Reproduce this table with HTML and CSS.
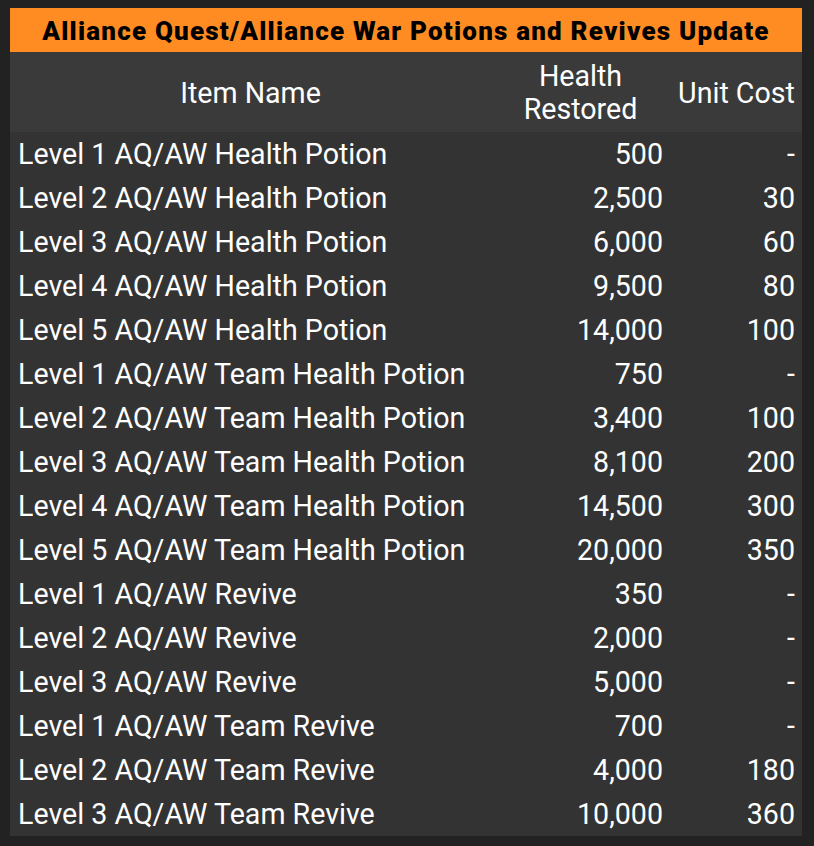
FILE: index.html
```html
<!DOCTYPE html>
<html>
<head>
<meta charset="utf-8">
<link rel="stylesheet" href="styles.css">
</head>
<body>
<table class="potions">
  <colgroup>
    <col class="c-name"><col class="c-health"><col class="c-cost">
  </colgroup>
  <thead>
    <tr><th colspan="3" class="title">Alliance Quest/Alliance War Potions and Revives Update</th></tr>
    <tr class="heads"><th>Item Name</th><th>Health<br>Restored</th><th>Unit Cost</th></tr>
  </thead>
  <tbody>
    <tr><td>Level 1 AQ/AW Health Potion</td><td class="num">500</td><td class="num">-</td></tr>
    <tr><td>Level 2 AQ/AW Health Potion</td><td class="num">2,500</td><td class="num">30</td></tr>
    <tr><td>Level 3 AQ/AW Health Potion</td><td class="num">6,000</td><td class="num">60</td></tr>
    <tr><td>Level 4 AQ/AW Health Potion</td><td class="num">9,500</td><td class="num">80</td></tr>
    <tr><td>Level 5 AQ/AW Health Potion</td><td class="num">14,000</td><td class="num">100</td></tr>
    <tr><td>Level 1 AQ/AW Team Health Potion</td><td class="num">750</td><td class="num">-</td></tr>
    <tr><td>Level 2 AQ/AW Team Health Potion</td><td class="num">3,400</td><td class="num">100</td></tr>
    <tr><td>Level 3 AQ/AW Team Health Potion</td><td class="num">8,100</td><td class="num">200</td></tr>
    <tr><td>Level 4 AQ/AW Team Health Potion</td><td class="num">14,500</td><td class="num">300</td></tr>
    <tr><td>Level 5 AQ/AW Team Health Potion</td><td class="num">20,000</td><td class="num">350</td></tr>
    <tr><td>Level 1 AQ/AW Revive</td><td class="num">350</td><td class="num">-</td></tr>
    <tr><td>Level 2 AQ/AW Revive</td><td class="num">2,000</td><td class="num">-</td></tr>
    <tr><td>Level 3 AQ/AW Revive</td><td class="num">5,000</td><td class="num">-</td></tr>
    <tr><td>Level 1 AQ/AW Team Revive</td><td class="num">700</td><td class="num">-</td></tr>
    <tr><td>Level 2 AQ/AW Team Revive</td><td class="num">4,000</td><td class="num">180</td></tr>
    <tr><td>Level 3 AQ/AW Team Revive</td><td class="num">10,000</td><td class="num">360</td></tr>
  </tbody>
</table>
</body>
</html>
```

FILE: styles.css
```css
html, body {
  margin: 0;
  padding: 0;
  background: #222222;
}
body {
  padding: 8px 12px 0 10px;
  font-family: Roboto, "Liberation Sans", sans-serif;
  color: #ffffff;
}
.potions {
  border-collapse: collapse;
  width: 792px;
  table-layout: fixed;
}
.c-name { width: 480px; }
.c-health { width: 180px; }
.c-cost { width: 132px; }
.potions th, .potions td {
  padding: 0 7px 0 8px;
  font-size: 28.6px;
  white-space: nowrap;
}
.potions th.title {
  background: #ff8c22;
  color: #000000;
  font-weight: 900;
  font-size: 26px;
  letter-spacing: 1.2px;
  height: 42px;
  line-height: 30px;
  text-align: center;
  padding: 2px 0 0 0;
}
.heads th {
  background: #3a3a3a;
  font-weight: 400;
  text-align: center;
  height: 78px;
  line-height: 33px;
  padding-top: 2px;
}
.potions tbody td {
  background: #333333;
  height: 44px;
  line-height: 44px;
  padding-top: 0;
}
.potions td.num {
  text-align: right;
}
```
